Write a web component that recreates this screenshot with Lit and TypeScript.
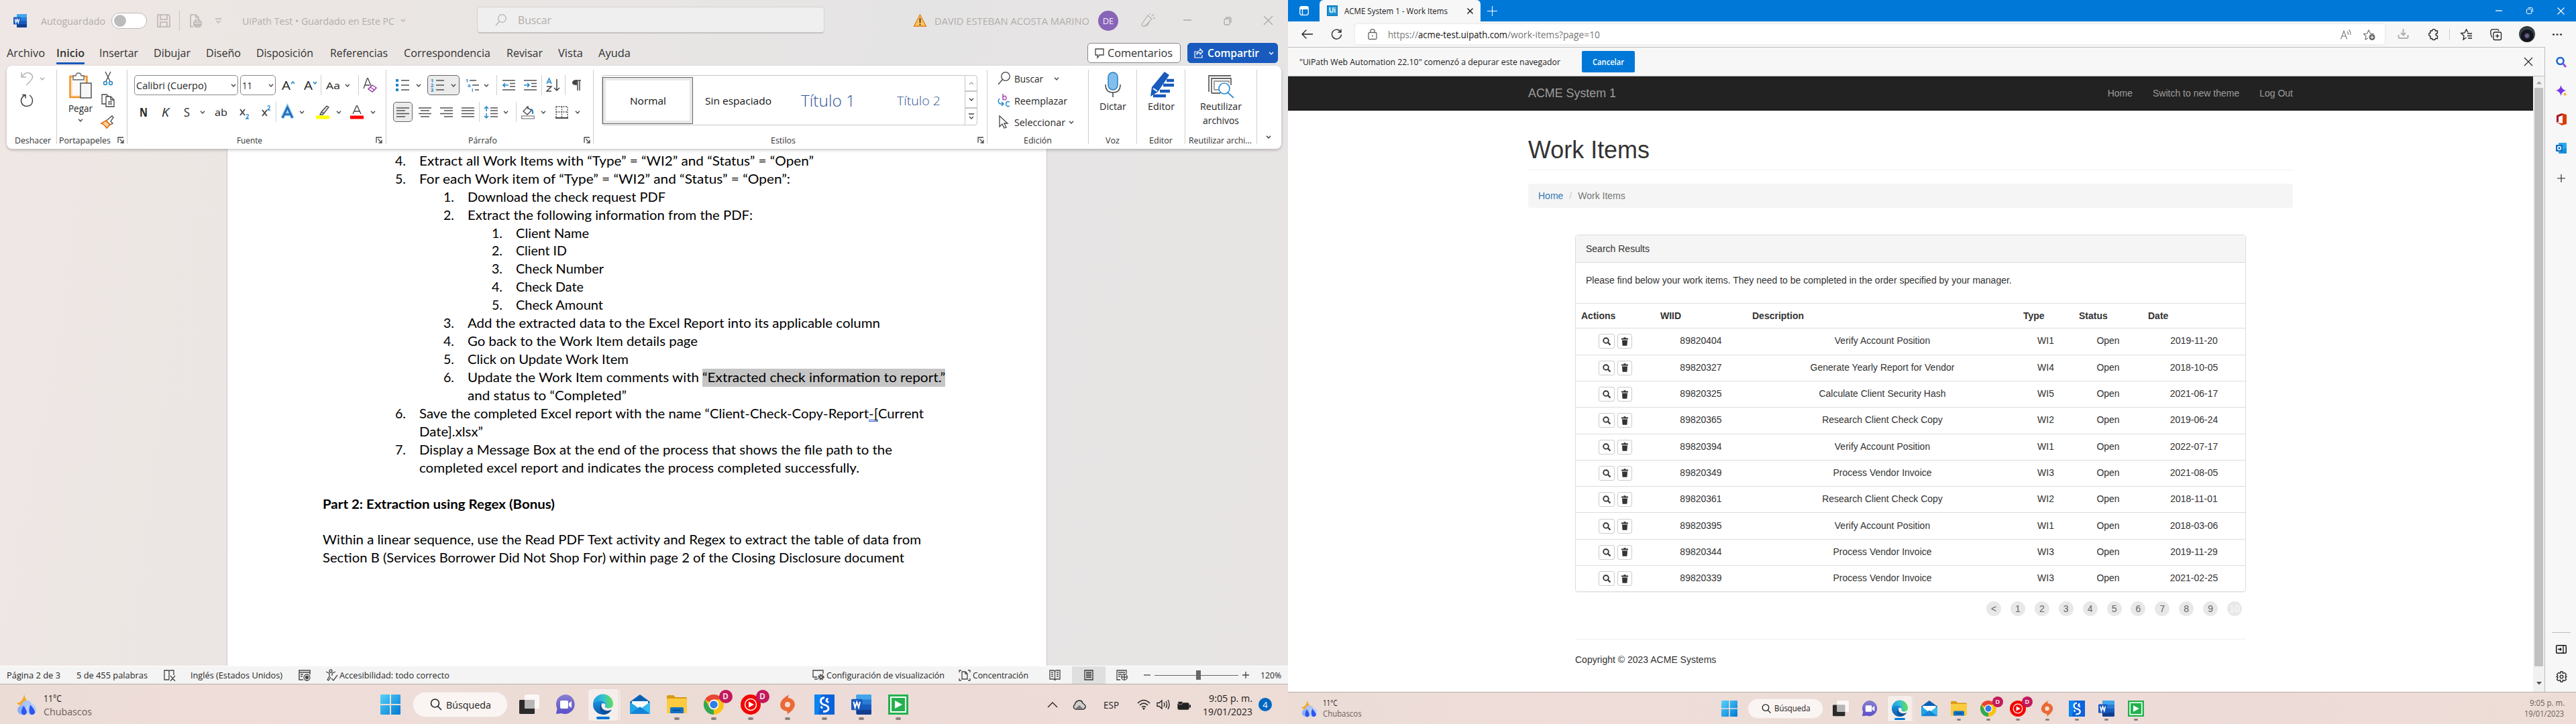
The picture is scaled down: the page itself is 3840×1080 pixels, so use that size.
import { LitElement, html, svg, css } from "lit";
import { customElement, property } from "lit/decorators.js";

const base = css`
  * { box-sizing: border-box; }
  .cell { flex: none; display: flex; align-items: center; justify-content: center; height: 100%; }
  .row { display: flex; align-items: center; }
  svg { display: block; flex: none; overflow: visible; }
`;

/* Single line of text set to a given measure. */
@customElement("fit-text")
class FitText extends LitElement {
  @property({ type: Number }) w = 0;
  @property() text = "";
  static styles = css`
    :host { display: inline-block; flex: none; white-space: pre; vertical-align: baseline; }
    span { display: inline-block; transform-origin: 0 50%; }
  `;
  render() { return html`<span>${this.text}</span>`; }
  firstUpdated() {
    this.style.width = this.w + "px";
    const s = this.renderRoot.querySelector("span")!;
    const ratio = this.getBoundingClientRect().width / s.getBoundingClientRect().width;
    s.style.transform = `scaleX(${ratio})`;
  }
}

type Item = [number, number, unknown];
/* Lays items out in a row from their left and right edges. */
const strip = (x0: number, items: Item[]) => {
  let cur = x0;
  return items.map(([a, b, c]) => {
    const m = a - cur;
    cur = b;
    return html`<span class="cell" style="margin-left:${m}px;width:${b - a}px">${c}</span>`;
  });
};
const tx = (a: number, b: number, text: string, cls = ""): Item => [a, b, html`<fit-text class=${cls} .w=${b - a} .text=${text}></fit-text>`];
const ft = (w: number, text: string, cls = "") => html`<fit-text class=${cls} .w=${w} .text=${text}></fit-text>`;
const ic = (w: number, h: number, body: unknown, vb = `0 0 ${w} ${h}`) =>
  html`<svg width=${w} height=${h} viewBox=${vb} fill="none" stroke="#444" stroke-width="1.3">${body}</svg>`;
const chev = (c = "#444", w = 8) => ic(w, 5, svg`<path d="M1 .8 4 4 7 .8" stroke=${c} stroke-width="1.3"/>`, "0 0 8 5");
const launch = ic(10, 10, svg`<path d="M1 9V1H9M3.5 3.5 9 9M9 4.5V9H4.5"/>`);
const vsep = html`<i class="vsep"></i>`;
const lines = (ls: number[][], c = "#505050") => svg`${ls.map(([a, b, y]) => svg`<path d="M${a} ${y}H${b}" stroke=${c} stroke-width="1.5"/>`)}`;

const wordIcon = (s: number) => ic(s, s, svg`<g stroke="none"><rect x="5" y="0" width="15" height="20" rx="1.2" fill="#2b7cd3"/><path d="M6.2 0H18.8Q20 0 20 1.2V5H5V1.2Q5 0 6.2 0Z" fill="#41a5ee"/><rect x="5" y="10" width="15" height="5" fill="#185abd"/><path d="M5 15H20V18.8Q20 20 18.8 20H6.2Q5 20 5 18.8Z" fill="#103f91"/><rect x="0" y="4.5" width="11" height="11" rx="1" fill="#185abd"/></g><path d="M2.3 7.2 3.7 12.8 5.5 7.6 7.3 12.8 8.7 7.2" stroke="#fff" stroke-width="1.4"/>`, "0 0 20 20");

const tb = {
  weather: ic(30, 31, svg`<g stroke="none"><path d="M11 0Q13 8 17 11Q14 17 8 16Q2 16 0 13Q9 12 11 0Z" fill="#f5a623"/><circle cx="15" cy="17" r="8" fill="#a9c4f7"/><circle cx="8" cy="23" r="7" fill="#8db0f5"/><circle cx="21" cy="22" r="8" fill="#b5cdfa"/><path d="M10 17q7 9 4 12q-4 3-6 0q-3-3 2-12zM20 15q9 10 7 13q-4 4-7 1q-3-4 0-14z" fill="#2f55ee"/></g>`),
  start: ic(30, 30, svg`<defs><linearGradient id="w" x1="0" y1="0" x2="1" y2="1"><stop offset="0" stop-color="#55d3fb"/><stop offset="1" stop-color="#0078d4"/></linearGradient></defs><path d="M1 0H14V14H0V1ZM16 0H29L30 1V14H16ZM0 16H14V30H1L0 29ZM16 16H30V29L29 30H16Z" fill="url(#w)" stroke="none"/>`),
  view: ic(30, 30, svg`<rect x="0" y="8" width="23" height="21" rx="1.5" fill="#2b2b2b" stroke="none"/><rect x="8" y="0" width="22" height="21" rx="1.5" fill="#fff" opacity=".78" stroke="none"/><rect x="8" y="8" width="15" height="13" fill="#b9b7b6" stroke="none"/>`),
  chat: ic(29, 30, svg`<defs><linearGradient id="c" x1="0" y1="0" x2="0" y2="1"><stop offset="0" stop-color="#8a7fd0"/><stop offset="1" stop-color="#5a50c9"/></linearGradient></defs><path d="M14.500 0A14.500 14.500 0 1 1 8 28L0 29 1.500 21A14.500 14.500 0 0 1 14.500 0Z" fill="url(#c)" stroke="none"/><rect x="6" y="9" width="12" height="12" rx="2" fill="#fff" stroke="none"/><path d="M19 13 23 10V20L19 17Z" fill="#fff" stroke="none"/>`),
  edge: ic(30, 30, svg`<defs><linearGradient id="e1" x1="0" y1=".4" x2="1" y2=".3"><stop offset="0" stop-color="#1b9de2"/><stop offset=".5" stop-color="#35c1d2"/><stop offset="1" stop-color="#66e04a"/></linearGradient><linearGradient id="e2" x1="0" y1="0" x2="0" y2="1"><stop offset="0" stop-color="#1491de"/><stop offset="1" stop-color="#0b5cae"/></linearGradient></defs><g stroke="none"><path d="M0 15A15 15 0 0 1 30 14Q30 20.500 23 20.500Q17 20.500 18 17Q19 11 12 10Q4 9 0 15Z" fill="url(#e1)"/><path d="M0 15Q3 9 11 9.500Q18 10 18.500 15Q15 11 11.500 15Q9 21 15 26Q20 29 27 24Q22 30 15 30A15 15 0 0 1 0 15Z" fill="url(#e2)"/><path d="M11 15Q8 25 16 29.900Q24 29 28 22.500Q20 26 15 22Q11 18 13 14Z" fill="#0d4f9a"/><path d="M13.500 14.500Q17 12.500 18.300 16Q17 19 18.500 20Q21 22 26 21Q20 25 15.500 21.500Q12.500 18 13.500 14.500Z" fill="#f5ece8"/></g>`),
  mail: ic(30, 30, svg`<g stroke="none"><path d="M0 11 15 0 30 11V15H0Z" fill="#0a61b4"/><path d="M3 10H27V18L15 27 3 18Z" fill="#fff"/><path d="M0 11 15 22 0 29Z" fill="#1fa5e8"/><path d="M30 11 15 22 30 29Z" fill="#35b9f1"/><path d="M0 29 15 18 30 29Z" fill="#1584d6"/></g>`),
  folder: ic(30, 28, svg`<g stroke="none"><path d="M0 2Q0 0 2 0H10L13 3H28Q30 3 30 5V10H0Z" fill="#d99a12"/><rect x="0" y="5" width="30" height="22" rx="1.500" fill="#fccb3f"/><path d="M5 27V20Q5 18 7 18H23Q25 18 25 20V27Z" fill="#1272c4"/><rect x="9" y="21.500" width="12" height="2" rx="1" fill="#0a4d96"/></g>`),
  chrome: ic(30, 30, svg`<g stroke="none"><circle cx="15" cy="15" r="15" fill="#fbc116"/><path d="M15 15 2 7.500A15 15 0 0 1 28 7.500H15Z" fill="#ea4335"/><path d="M2 7.500 8.500 18.800 15 22.500 15 30A15 15 0 0 1 2 7.500Z" fill="#34a853"/><path d="M15 30 21.500 18.800 15 22Z" fill="#fbc116"/><circle cx="15" cy="15" r="7.400" fill="#fff"/><circle cx="15" cy="15" r="5.800" fill="#2f7de9"/></g>`),
  yt: ic(30, 30, svg`<circle cx="15" cy="15" r="15" fill="#f50400" stroke="none"/><circle cx="15" cy="15" r="8.500" stroke="#fff" stroke-width="1.500"/><path d="M12 10.500 20 15 12 19.500Z" fill="#fff" stroke="none"/>`),
  origin: ic(24, 30, svg`<path d="M15 0Q12 3 13 5Q22 6 23 15Q22 23 11 30Q13 27 11 25Q1 23 1 15Q2 6 15 0Z" fill="#eb6a35" stroke="none"/><circle cx="12" cy="15" r="4" fill="#f3ddd5" stroke="none"/>`),
  ess: ic(30, 30, svg`<rect width="30" height="30" fill="#0b62da" stroke="none"/><path d="M0 0H11L6 30H0Z" fill="#0a84f2" stroke="none"/><path d="M15 4.500Q9.500 5 9.500 10Q9.500 14 15 15.500Q21 17 21 21Q20.500 25.500 13 25.500M20.500 6Q18 6.500 18 9.500L21 12M9.500 18 12 20.500" stroke="#fff" stroke-width="2.800"/>`),
  cam: ic(30, 30, svg`<rect width="30" height="30" fill="#23b14d" stroke="none"/><rect x="4" y="4" width="22" height="22" stroke="#fff" stroke-width="2"/><path d="M10 9 21 15 10 21Z" fill="#fff" stroke="none"/>`),
};

@customElement("task-bar")
class TaskBar extends LitElement {
  @property({ type: Boolean }) main = false;
  static styles = [base, css`
    :host { display: block; color: #1d1a19; font: 15px "Open Sans", sans-serif; background: linear-gradient(90deg, #ebdcd6, #efddda 20%, #ecdcd5 45%, #eddbd8 75%, #edddd6); }
    .bar { height: 59px; padding-top: 1px; }
    .two { display: flex; flex-direction: column; gap: 0; width: 100%; line-height: 20px; }
    .dim { color: #6b605d; }
    .right { align-items: flex-end; }
    .pill { display: flex; align-items: center; width: 100%; height: 38px; border-radius: 19px; background: #faf5f3; border: 1px solid #f0e3df; }
    .app { display: grid; grid-template-rows: 1fr 7px; width: 100%; height: 49px; padding-top: 7px; place-items: center; position: relative; }
    .on { background: #f6eeeb; border: 1px solid #e6d8d4; border-radius: 5px; box-shadow: 3px 0 0 -1px #f3e8e4; }
    .dot { width: 8px; height: 4px; border-radius: 2px; background: #8b807d; }
    .on .dot { width: 20px; background: #0078d7; }
    .none { background: transparent; }
    .badge { position: absolute; left: 31px; top: 2px; width: 20px; height: 20px; border-radius: 50%; background: #c2185b; color: #f4d9e3; font-size: 12px; line-height: 20px; text-align: center; }
    .count { width: 20px; height: 20px; border-radius: 50%; background: #0067c0; color: #fff; font-size: 13px; line-height: 20px; text-align: center; }
  `];
  render() {
    const o = this.main ? 0 : 241;
    const app = (cx: number, icon: unknown, k = "", badge = false): Item => [o + cx - 23.5, o + cx + 23.5,
      html`<div class="app ${k === "on" ? "on" : ""}">${icon}<i class="dot ${k === "off" ? "none" : ""}"></i>${badge ? html`<b class="badge">D</b>` : ""}</div>`];
    const end = this.main ? 1867 : 2378.5;
    const tray: Item[] = this.main ? [
      [1561, 1577, ic(16, 10, svg`<path d="M1 9 8 2 15 9" stroke="#222"/>`)],
      [1599, 1619, ic(20, 15, svg`<path d="M4 14A4 4 0 0 1 3 7Q5 1 10 1Q14 1 15 5Q20 8 19 11Q18 14 15 14Z" fill="#cfccca" stroke="#222"/><path d="M10 8 3 14H16Z" fill="#777" stroke="none"/>`)],
      tx(1645, 1668, "ESP"),
      [1695, 1714, ic(20, 16, svg`<path d="M1 6Q10-3 19 6M4 9Q10 3 16 9M7 12Q10 9 13 12" stroke="#222" stroke-width="1.500"/><circle cx="10" cy="14" r="1.500" fill="#222" stroke="none"/>`)],
      [1724, 1744, ic(20, 16, svg`<path d="M1 5.500H4L8 2V14L4 10.500H1ZM11 5Q13 8 11 11M14 3Q17 8 14 13M17 1Q21 8 17 15" stroke="#222"/>`)],
      [1754, 1775, ic(21, 17, svg`<rect x="2" y="6" width="16" height="9" rx="1.500" fill="#222" stroke="#222"/><path d="M19 8.500H21V12.500H19Z" fill="#222" stroke="none"/><path d="M4 0V3M8 0V3M2 3.500H9V5Q9 8 5.500 8Q2 8 2 5Z" fill="#222" stroke="#ecdcd7" stroke-width=".6"/>`)],
    ] : [];
    return html`<div class="bar row">${strip(0, [
      [25, 55, tb.weather],
      [65, 137, html`<div class="two">${ft(27, "11°C")}${ft(72, "Chubascos", "dim")}</div>`],
      [o + 566.5, o + 596.5, tb.start],
      [o + 615, o + 757, html`<div class="pill">${strip(615, [[640, 658, ic(18, 18, svg`<circle cx="7.500" cy="7" r="6" stroke="#222" stroke-width="1.600"/><path d="M11.500 11.500 17 17" stroke="#222" stroke-width="1.600"/>`)], tx(664, 731, "Búsqueda")])}</div>`],
      app(788.5, tb.view, "off"), app(843.5, tb.chat, "off"), app(899, tb.edge, "on"), app(954, tb.mail, "off"),
      app(1009, tb.folder), app(1064, tb.chrome, "", true), app(1119, tb.yt, "", true), app(1174, tb.origin),
      app(1229, tb.ess), app(1284, wordIcon(30)), app(1339, tb.cam), ...tray,
      [end - 74, end, html`<div class="two right ${this.main ? "" : "dim"}">${ft(65, "9:05 p. m.")}${ft(74, "19/01/2023")}</div>`],
      ...(this.main ? [[1876, 1896, html`<div class="count">4</div>`] as Item] : []),
    ])}</div>`;
  }
}

@customElement("word-window")
class WordWindow extends LitElement {
  static styles = [base, css`
    :host { display: flex; flex-direction: column; height: 1080px; font: 15px "Open Sans", sans-serif; color: #262626; background: linear-gradient(100deg, #efe7e5, #ebe6e3 22%, #e8e5e4 45%, #e5e4e4 65%, #e8e4e4); }
    .title { height: 61px; color: #b3adab; }
    .toggle { width: 53px; height: 24px; border-radius: 12px; background: #fff; border: 1px solid #bcb8b6; padding: 2px 3px; }
    .toggle i { display: block; width: 18px; height: 18px; border-radius: 50%; background: #bdbcbc; }
    .vl { width: 1px; height: 30px; background: #c9c3c1; }
    .search { width: 100%; height: 40px; margin-top: -1px; border-radius: 5px; background: #efefef; border: 1px solid #d6d3d2; border-bottom: 2px solid #c4c2c1; font-size: 16px; }
    .avatar { width: 30px; height: 30px; border-radius: 50%; background: #8764b8; color: #f3eef9; font-size: 13px; line-height: 30px; text-align: center; }
    .tabs { height: 37px; font-size: 16px; color: #333; }
    .tabs .cell { align-items: center; }
    .tab { border-bottom: 3px solid transparent; line-height: 27px; padding-top: 3px; }
    .sel { border-bottom-color: #185abd; font-weight: 600; border-radius: 0 0 1px 1px; }
    .btn { display: flex; align-items: center; width: 100%; height: 30px; border-radius: 5px; border: 1px solid #8a8886; background: #fff; font-size: 16px; margin-top: -1px; }
    .blue { background: #185abd; border-color: #185abd; color: #fff; font-weight: 600; }
    .ribbon { position: relative; z-index: 2; display: flex; margin: 0 10px; height: 124px; padding-top: 6px; background: #fff; border-radius: 8px; box-shadow: 0 2px 4px rgba(0,0,0,.22); font-size: 14px; flex: none; }
    .group { flex: none; height: 111px; border-right: 1px solid #d1cfce; display: flex; flex-direction: column; }
    .group:last-child { border: 0; }
    .body { height: 99px; }
    .label { height: 12px; font-size: 12.5px; color: #333; }
    .r46 { height: 46px; } .r34 { height: 34px; } .r26 { height: 26px; } .r40 { height: 40px; } .r24 { height: 24px; }
    .vsep { width: 1px; height: 30px; background: #d1cfce; }
    .box { width: 100%; height: 30px; display: flex; align-items: center; border: 1px solid #8a8886; border-radius: 5px; }
    .hot { background: #ebebeb; border-color: #666; }
    .ch { font-size: 19px; line-height: 24px; }
    .b { font-weight: 700; font-size: 18px; } .i { font-style: italic; } .u { text-decoration: underline; } .s { text-decoration: line-through; }
    .clip { display: flex; }
    .big { display: flex; flex-direction: column; align-items: center; padding-top: 3px; line-height: 21px; }
    .big svg { margin-bottom: 2px; }
    .paste { padding-top: 5px; }
    .paste svg { margin-bottom: 4px; }
    .gallery { display: flex; height: 75px; border: 1px solid #c8c6c4; border-radius: 4px; margin: 8px 14px 0 12px; width: 560px; font: 15px "Open Sans"; color: #111; }
    .normal { width: 100%; height: 70px; border: 1px solid #666; box-shadow: inset 0 0 0 4px #e8e8e8; display: flex; align-items: center; justify-content: center; }
    .t1 { font-size: 23px; color: #2f5496; font-weight: 300; } .t2 { font-size: 18px; color: #2f5496; font-weight: 300; }
    .roll { display: grid; grid-template-rows: 1fr 1fr 1fr; place-items: center; width: 18px; height: 73px; border-left: 1px solid #c8c6c4; margin-left: auto; }
    .roll span { display: flex; width: 100%; height: 100%; align-items: center; justify-content: center; border-bottom: 2px solid #c8c6c4; }
    .roll span:last-child { border: 0; }
    .canvas { flex: 1; display: flex; }
    .page { width: 1223px; margin-left: 338px; background: #fff; border: 1px solid #c9c5c4; border-width: 0 1px; padding: 4.800px 0 0 142px; font: 19.600px Lato, sans-serif; color: #000; }
    .line { display: flex; height: 26.940px; line-height: 26.940px; white-space: pre; }
    .l1 { padding-left: 108px; } .l2 { padding-left: 180px; } .l3 { padding-left: 252px; } .c1 { padding-left: 144px; } .c2 { padding-left: 216px; }
    .num { width: 36px; flex: none; display: block; }
    .mark { background: #c6c6c6; height: 27px; margin-left: 5px; }
    .bold { font-weight: 700; }
    .gram { display: inline-block; height: 25px; border-bottom: 3px double #2b5fd0; }
    .status { height: 28px; background: #f4f4f4; border-top: 1px solid #fff; border-bottom: 1px solid #b8acaa; font-size: 12.800px; }
    .active { width: 100%; height: 100%; background: #dfdfdf; display: flex; align-items: center; justify-content: center; }
    .slider { width: 100%; height: 1px; background: #666; display: flex; align-items: center; }
    .slider i { width: 7px; height: 14px; background: #666; margin-left: 62px; }
  `];
  group(a: number, b: number, body: unknown, label: Item[]) {
    return html`<section class="group" style="width:${b - a + 1}px"><div class="body">${body}</div><div class="label row">${strip(a, label)}</div></section>`;
  }
  ribbon() {
    const A = (a: number, b: number, up: boolean): Item => [a, b, html`${ft(13, "A", "ch")}${ic(7, 14, svg`<path d=${up ? "M1 5 3.500 2 6 5" : "M1 2 3.500 5 6 2"} stroke="#2086c9" stroke-width="1.500"/>`)}`];
    const list = (c: unknown) => ic(20, 20, svg`${lines([[8, 20, 3], [8, 20, 10], [8, 20, 17]])}${c}`);
    const dig = (x: number, y: number, s: string) => svg`<text x=${x} y=${y} font-size="7.500" font-weight="700" font-family="Open Sans" fill="#2086c9" stroke="none">${s}</text>`;
    const al = (k: number) => {
      const s = [[19, 3], [13, 7], [19, 11.5], [13, 16]];
      return ic(19, 19, lines(s.map(([w, y]) => k === 3 ? [0, 19, y] : k === 0 ? [0, w, y] : k === 1 ? [(19 - w) / 2, (19 + w) / 2, y] : [19 - w, 19, y])));
    };
    const ind = (r: boolean) => ic(19, 18, svg`${lines([[0, 19, 2], [11, 19, 6.5], [11, 19, 11], [0, 19, 16]])}<path d=${r ? "M0 9H8M5 6 8 9 5 12" : "M1 9H9M4 6 1 9 4 12"} stroke="#2086c9" stroke-width="1.500"/>`);
    return html`<div class="ribbon">
      ${this.group(10, 84, html`
        <div class="row r26">${strip(10, [[31, 50, ic(19, 21, svg`<path d="M1 1V8H8M1.500 7.500Q7 0 13 2Q19 5 17 10Q15 14 8 20" stroke="#b5b3b2" stroke-width="1.500"/>`)], [59, 67, chev("#aaa")]])}</div>
        <div class="row r40">${strip(10, [[30, 50, ic(20, 20, svg`<path d="M3 1.500H8V6.500M7.500 2Q1 5 1.500 11Q3 18.500 10 18.500Q18 18 18.500 10.500Q18.500 5 14 2" stroke-width="1.500"/>`)]])}</div>`,
        [tx(22, 76, "Deshacer")])}
      ${this.group(85, 189, html`<div class="clip">
        <div class="big paste" style="margin-left:16px;width:38px">${ic(34, 38, svg`<rect x="1.500" y="5" width="25" height="31" fill="#fde8c4" stroke="#f0922b" stroke-width="2.500"/><rect x="5" y="9" width="18" height="24" fill="#fafafa" stroke="none"/><path d="M6 4H10Q10 0 14 0Q18 0 18 4H22V10H6Z" fill="#fff" stroke="#666"/><rect x="17" y="15" width="16" height="22" fill="#f7f7f7" stroke="#555" stroke-width="1.500"/>`)}${ft(36, "Pegar")}<div style="margin-top:5px">${chev()}</div></div>
        <div style="margin-left:12px">
          <div class="row r26">${ic(20, 21, svg`<path d="M6 0 13 14M14 0 7 14"/><circle cx="6" cy="17" r="2.500" stroke="#2086c9" stroke-width="1.500"/><circle cx="14" cy="17" r="2.500" stroke="#2086c9" stroke-width="1.500"/>`)}</div>
          <div class="row r40">${ic(20, 20, svg`<path d="M7 15H1V1H8L11 4M7 4H14L19 9V19H7ZM14 4V9H19M10 12H16M10 15H16"/>`)}</div>
          <div class="row r24">${ic(20, 20, svg`<path d="M10 6 16 1 18 3 14 9 17 12 13 14 7 8Z" fill="#fff"/><path d="M7 8 13 14 8 19Q5 14 0 12Z" fill="#fbd59b" stroke="#e8701b" stroke-width="1.800"/>`)}</div>
        </div></div>`, [tx(88, 165, "Portapapeles"), [175, 185, launch]])}
      ${this.group(190, 575, html`
        <div class="row r46">${strip(190, [
          [200, 355, html`<div class="box">${strip(201, [tx(203, 308, "Calibri (Cuerpo)"), [344, 352, chev()]])}</div>`],
          [358, 411, html`<div class="box">${strip(359, [tx(361, 376, "11"), [400, 408, chev()]])}</div>`],
          A(420, 440, true), A(453, 472, false), [478, 479, vsep],
          tx(486, 507, "Aa"), [514, 521, chev()], [534, 535, vsep],
          [541, 562, ic(21, 22, svg`<path d="M1 16 6.500 1H7.500L12 12M3 11H10"/><path d="M14 11 20 15 14 21 8 17Z" fill="#fff" stroke="#9b3aa5" stroke-width="1.500"/><path d="M11 14 17 18" stroke="#9b3aa5"/>`)]])}</div>
        <div class="row r34">${strip(190, [
          tx(208, 220, "N", "b"), tx(241, 252, "K", "ch i"), tx(274, 283, "S", "ch u"), [298, 305, chev()],
          tx(320, 339, "ab", "s"),
          [357, 372, ic(15, 20, svg`<path d="M1 6 8 15M8 6 1 15" stroke-width="1.800"/><path d="M10 15Q11 13 13 14Q14 16 10 20H14" stroke="#2086c9"/>`)],
          [390, 403, ic(13, 20, svg`<path d="M1 7 8 16M8 7 1 16" stroke-width="1.800"/><path d="M9 2Q10 0 12 1Q13 3 9 7H13" stroke="#2086c9"/>`)],
          [411, 412, vsep],
          [419, 438, ic(19, 19, svg`<path d="M2 18 9.500 2 17 18M5 12.500H14" stroke="#7fb9ea" stroke-width="5"/><path d="M2 18 9.500 2 17 18M5 12.500H14" stroke="#1767b5" stroke-width="2.200"/>`)],
          [446, 454, chev()],
          [471, 491, ic(20, 21, svg`<path d="M8 10 16 1 19 3 12 12ZM8 10 6 14H10L12 12" fill="#ddd"/><rect x="0" y="15.500" width="20" height="5" fill="#ff0" stroke="none"/>`)],
          [501, 508, chev()],
          [522, 542, ic(20, 21, svg`<path d="M4 13 9.500 1H10.500L16 13M6 9H14"/><rect x="0" y="15.500" width="20" height="5" fill="red" stroke="none"/>`)],
          [552, 559, chev()]])}</div>`, [tx(353, 391, "Fuente"), [560, 570, launch]])}
      ${this.group(576, 884, html`
        <div class="row r46">${strip(576, [
          [590, 610, list(svg`<path d="M0 3H4M0 10H4M0 17H4" stroke="#2086c9" stroke-width="4"/>`)], [620, 628, chev()],
          [637, 685, html`<div class="box hot">${strip(638, [[642, 662, list(svg`${dig(0, 6, "1")}${dig(0, 13, "2")}${dig(0, 20, "3")}`)], [672, 679, chev()]])}</div>`],
          [694, 714, ic(20, 20, svg`${lines([[6, 16, 3], [10, 20, 10], [14, 20, 17]])}${dig(0, 6, "1")}${dig(3, 13, "a")}${dig(9, 20, "i")}`)], [721, 728, chev()],
          [740, 741, vsep], [749, 768, ind(false)], [781, 800, ind(true)], [807, 808, vsep],
          [814, 835, ic(21, 20, svg`<path d="M1 8 4.500 0 8 8M2.500 5.500H7" stroke="#2086c9" stroke-width="1.500"/><path d="M1 12H8L1 19H8M16 1V18M12 14 16 18 20 14" stroke-width="1.500"/>`)],
          [842, 843, vsep],
          [853, 866, ic(13, 17, svg`<path d="M6 1H13M8 1V16M11 1V16" stroke-width="1.500"/><path d="M7 0Q0 0 0 4.500Q0 8 7 8Z" fill="#444" stroke="none"/>`)]])}</div>
        <div class="row r34">${strip(576, [
          [586, 615, html`<div class="box hot">${strip(587, [[591, 610, al(0)]])}</div>`],
          [624, 643, al(1)], [656, 675, al(2)], [688, 707, al(3)], [714, 715, vsep],
          [721, 743, ic(22, 19, svg`${lines([[10, 21, 3], [10, 21, 7], [10, 21, 11.5], [10, 21, 16]])}<path d="M4 1V8M1 4 4 1 7 4M4 11V18M1 15 4 18 7 15" stroke="#2086c9" stroke-width="1.500"/>`)],
          [750, 757, chev()], [769, 770, vsep],
          [777, 797, ic(20, 21, svg`<path d="M8 2 15 8 9 14 3 9 10 2V6"/><path d="M14 6Q18 6 17 13" stroke="#2086c9" stroke-width="2"/><rect x=".7" y="16" width="18.500" height="4" stroke="#888"/>`)],
          [806, 814, chev()],
          [828, 847, ic(19, 19, svg`<path d="M1 1H18V17M1 1V17M9.500 1V17M1 9H18" stroke-dasharray="2 1.500"/><path d="M0 18H19" stroke-width="2"/>`)],
          [857, 865, chev()]])}</div>`, [tx(698, 741, "Párrafo"), [870, 880, launch]])}
      ${this.group(885, 1471, html`<div class="gallery row">${strip(898, [
          [898, 1033, html`<div class="normal">${ft(54, "Normal")}</div>`],
          tx(1051, 1150, "Sin espaciado"), tx(1194, 1275, "Título 1", "t1"), tx(1337, 1402, "Título 2", "t2")])}
          <div class="roll"><span>${ic(8, 5, svg`<path d="M1 4 4 1 7 4" stroke="#aaa"/>`)}</span><span>${chev()}</span><span>${ic(8, 9, svg`<path d="M0 1H8M1 5 4 8 7 5"/>`)}</span></div></div>`,
        [tx(1149, 1186, "Estilos"), [1457, 1467, launch]])}
      ${this.group(1472, 1622, html`
        <div class="row r26">${strip(1472, [[1487, 1507, ic(20, 20, svg`<circle cx="12" cy="7" r="6.300"/><path d="M7.500 11.500 1 19"/>`)], tx(1512, 1555, "Buscar"), [1571, 1578, chev()]])}</div>
        <div class="row r40">${strip(1472, [[1487, 1506, ic(19, 20, svg`<path d="M8 0V9M8 5Q10 2 12.500 4Q14 8 11 9Q9 9 8 7" stroke="#a64cb0" stroke-width="1.500"/><path d="M18 12Q13 10 12.500 15Q13 20 18 18M3 7Q-1 12 4 15H9M6 12 9 15 6 18" stroke="#2086c9" stroke-width="1.500"/>`)], tx(1512, 1591, "Reemplazar")])}</div>
        <div class="row r24">${strip(1472, [[1489, 1503, ic(14, 20, svg`<path d="M1 1V17L5 13 8 19 11 18 8 12H13Z"/>`)], tx(1512, 1588, "Seleccionar"), [1593, 1600, chev()]])}</div>`,
        [tx(1526, 1568, "Edición")])}
      ${this.group(1623, 1694, html`<div class="big">${ic(24, 39, svg`<rect x="5" y="1" width="14" height="26" rx="7" fill="#83bfec" stroke="#2a7fc4" stroke-width="1.500"/><path d="M1 19Q1 31 12 31Q23 31 23 19M12 31V38" stroke-width="1.500"/>`)}${ft(40, "Dictar")}</div>`, [tx(1648, 1669, "Voz")])}
      ${this.group(1695, 1766, html`<div class="big">${ic(38, 39, svg`<path d="M24 0 31 5 14 30 3 37 5 23Z" fill="#185abd" stroke="none"/><path d="M7 25 13 29" stroke="#fff" stroke-width="2"/><path d="M27 13H38M22 20H38M17 29H32M7 36H26" stroke="#185abd" stroke-width="4.500"/>`)}${ft(40, "Editor")}</div>`, [tx(1713, 1748, "Editor")])}
      ${this.group(1767, 1873, html`<div class="big">${ic(38, 39, svg`<path d="M1 30V6H34M5 32V10H34V20M5 32H18" stroke="#666" stroke-width="1.800"/><path d="M9 27V14H31V17M9 27H16" stroke="#999" stroke-width="1.800"/><circle cx="24" cy="25" r="8" fill="#fff" stroke="#2f8fd4" stroke-width="1.700"/><path d="M29 31 38 39" stroke="#2f8fd4" stroke-width="1.700"/>`)}${ft(62, "Reutilizar")}${ft(54, "archivos")}</div>`, [tx(1772, 1866, "Reutilizar archi...")])}
      ${this.group(1874, 1909, "", [[1885, 1897, html`<div style="margin-top:-9px">${chev("#333", 12)}</div>`]])}
    </div>`;
  }
  line(pad: string, num: string, ...parts: unknown[]) {
    return html`<div class="line ${pad}">${num ? html`<span class="num">${ft(16, num)}</span>` : ""}${parts}</div>`;
  }
  render() {
    const g = "#b9b3b1";
    const L = this.line.bind(this);
    const d = "#444";
    return html`
      <div class="title row">${strip(0, [
        [20, 40, wordIcon(20)], tx(61, 157, "Autoguardado"),
        [166, 219, html`<div class="toggle"><i></i></div>`],
        [234, 254, ic(20, 20, svg`<path d="M1 1H17L19 3V19H1ZM5 1V8H15V1M5 19V12H15V19" stroke=${g} stroke-width="1.500"/>`)],
        [267, 268, html`<i class="vl"></i>`],
        [283, 301, ic(18, 20, svg`<path d="M5 19H1V1H9L13 5V9M9 1V5H13M6 12H17V17H6ZM8 12V9H15V12M8 15H15V19H8Z" stroke=${g} stroke-width="1.500"/>`)],
        [321, 330, ic(9, 8, svg`<path d="M0 1H9M1.500 4 4.500 7 7.500 4" stroke=${g}/>`)],
        tx(361, 588, "UiPath Test • Guardado en Este PC"), [595, 607, chev(g, 12)],
        [711, 1229, html`<div class="search row">${strip(712, [[738, 755, ic(17, 18, svg`<circle cx="10.500" cy="6.500" r="5.800" stroke=${g}/><path d="M6.500 11 1 17" stroke=${g}/>`)], tx(772, 822, "Buscar")])}</div>`],
        [1362, 1381, ic(19, 19, svg`<path d="M9.500 1 18.500 18H.5Z" fill="#fbc55c" stroke="#e07b1c"/><path d="M9.500 6V13M9.500 14.500V16.500" stroke="#333" stroke-width="1.700"/>`)],
        tx(1393, 1624, "DAVID ESTEBAN ACOSTA MARINO"), [1637, 1667, html`<div class="avatar">DE</div>`],
        [1701, 1722, ic(21, 21, svg`<path d="M1 16 10 3 16 8 6 19 2 19ZM6 17Q9 21 12 13M13 2V0M16 4 19 1M18 7H21" stroke=${g}/>`)],
        [1764, 1776, ic(12, 2, svg`<path d="M0 0H12" stroke="#aaa" stroke-width="1.500"/>`)],
        [1824, 1836, ic(12, 12, svg`<rect x="1" y="3" width="8" height="9" rx="1.500" stroke="#aaa"/><path d="M3 1H9Q11 1 11 3V9" stroke="#aaa"/>`)],
        [1884, 1897, ic(13, 13, svg`<path d="M0 0 13 13M13 0 0 13" stroke="#aaa"/>`)],
      ])}</div>
      <div class="tabs row">${strip(0, [
        ...([[10, 67, "Archivo"], [84, 126, "Inicio"], [148, 206, "Insertar"], [229, 284, "Dibujar"], [307, 359, "Diseño"], [382, 467, "Disposición"], [492, 578, "Referencias"], [602, 731, "Correspondencia"], [755, 809, "Revisar"], [832, 869, "Vista"], [892, 940, "Ayuda"]] as [number, number, string][])
          .map(([a, b, s]) => tx(a, b, s, s === "Inicio" ? "tab sel" : "tab")),
        [1621, 1760, html`<div class="btn">${strip(1622, [[1632, 1646, ic(14, 15, svg`<path d="M1 1H13V10H7L4 14V10H1Z"/>`)], tx(1651, 1748, "Comentarios")])}</div>`],
        [1770, 1905, html`<div class="btn blue">${strip(1771, [[1780, 1794, ic(14, 15, svg`<path d="M4 5H1V14H12V10M9 1 13 5 9 9V6.500Q5 6 4 10Q4 3.500 9 3.500Z" stroke="#fff" stroke-width="1.200"/>`)], tx(1800, 1877, "Compartir"), [1891, 1899, chev("#fff")]])}</div>`],
      ])}</div>
      ${this.ribbon()}
      <div class="canvas"><div class="page">
        ${L("l1", "4.", ft(588, "Extract all Work Items with “Type” = “WI2” and “Status” = “Open”"))}
        ${L("l1", "5.", ft(553, "For each Work item of “Type” = “WI2” and “Status” = “Open”:"))}
        ${L("l2", "1.", ft(295, "Download the check request PDF"))}
        ${L("l2", "2.", ft(425, "Extract the following information from the PDF:"))}
        ${L("l3", "1.", ft(109, "Client Name"))}
        ${L("l3", "2.", ft(76, "Client ID"))}
        ${L("l3", "3.", ft(131, "Check Number"))}
        ${L("l3", "4.", ft(101, "Check Date"))}
        ${L("l3", "5.", ft(130, "Check Amount"))}
        ${L("l2", "3.", ft(615, "Add the extracted data to the Excel Report into its applicable column"))}
        ${L("l2", "4.", ft(343, "Go back to the Work Item details page"))}
        ${L("l2", "5.", ft(240, "Click on Update Work Item"))}
        ${L("l2", "6.", ft(345, "Update the Work Item comments with"), html`<span class="mark">${ft(362, "“Extracted check information to report.”")}</span>`)}
        ${L("c2", "", ft(237, "and status to “Completed”"))}
        ${L("l1", "6.", ft(670, "Save the completed Excel report with the name “Client-Check-Copy-Report"), html`<span class="gram">${ft(14, "-[")}</span>`, ft(68, "Current"))}
        ${L("c1", "", ft(95, "Date].xlsx”"))}
        ${L("l1", "7.", ft(705, "Display a Message Box at the end of the process that shows the file path to the"))}
        ${L("c1", "", ft(656, "completed excel report and indicates the process completed successfully."))}
        ${L("", "")}
        ${L("bold", "", ft(346, "Part 2: Extraction using Regex (Bonus)"))}
        ${L("", "")}
        ${L("", "", ft(892, "Within a linear sequence, use the Read PDF Text activity and Regex to extract the table of data from"))}
        ${L("", "", ft(867, "Section B (Services Borrower Did Not Shop For) within page 2 of the Closing Disclosure document"))}
      </div></div>
      <div class="status row">${strip(0, [
        tx(10, 90, "Página 2 de 3"), tx(114, 220, "5 de 455 palabras"),
        [244, 262, ic(18, 17, svg`<path d="M8 15H1V1H7L8 2.500 9 1H15V8M8 2V15M10 9 17 17M17 9 10 17" stroke=${d}/>`)],
        tx(284, 421, "Inglés (Estados Unidos)"),
        [445, 463, ic(18, 17, svg`<path d="M7 15H1V1H17V7M1 4H17M3 7H7M3 10H6" stroke=${d} stroke-width="1.500"/><circle cx="12.500" cy="11.500" r="4.500" stroke=${d}/><circle cx="12.500" cy="11.500" r="2" fill=${d}/>`)],
        [485, 503, ic(18, 18, svg`<circle cx="8" cy="3" r="2" stroke=${d}/><path d="M1 4 6 6.500V11L3 16 5 17 8 12M15 4 10 6.500V10M9 14 12 17 18 9" stroke=${d}/>`)],
        tx(506, 670, "Accesibilidad: todo correcto"),
        [1211, 1229, ic(18, 16, svg`<path d="M7 11H1V1H16V6M3 14H8" stroke=${d}/><circle cx="13" cy="11" r="3.500" stroke=${d} stroke-width="2.200" stroke-dasharray="1.800 1"/><circle cx="13" cy="11" r="2" stroke=${d}/>`)],
        tx(1232, 1408, "Configuración de visualización"),
        [1429, 1447, ic(18, 17, svg`<path d="M4 1H1V4M14 1H17V4M4 16H1V13M14 16H17V13M5 3H10L13 6V14H5ZM10 3V6H13" stroke=${d}/>`)],
        tx(1450, 1533, "Concentración"),
        [1564, 1581, ic(17, 16, svg`<path d="M8.500 2V15M1 1H7L8.500 2.500 10 1H16V14H10L8.500 15.500 7 14H1ZM3 4H6M3 7H6M3 10H6M11 4H14M11 7H14M11 10H14" stroke=${d}/>`)],
        [1598, 1648, html`<div class="active">${ic(14, 16, svg`<path d="M1 1H13V15H1ZM3 4H11M3 6.500H11M3 9H11M3 11.500H11" stroke="#333"/>`)}</div>`],
        [1664, 1681, ic(17, 16, svg`<path d="M6 15H1V1H15V6M3 4H13M3 7H8M3 10H6" stroke=${d}/><circle cx="12" cy="11" r="4.300" stroke=${d}/><path d="M8 11H16M12 7V15" stroke=${d}/>`)],
        [1705, 1715, ic(10, 2, svg`<path d="M0 1H10" stroke=${d}/>`)],
        [1721, 1846, html`<div class="slider"><i></i></div>`],
        [1852, 1862, ic(10, 10, svg`<path d="M0 5H10M5 0V10" stroke=${d}/>`)],
        tx(1879, 1910, "120%"),
      ])}</div>
      <task-bar main></task-bar>`;
  }
}

const rows: [string, string, string, string][] = [
  ["89820404", "Verify Account Position", "WI1", "2019-11-20"],
  ["89820327", "Generate Yearly Report for Vendor", "WI4", "2018-10-05"],
  ["89820325", "Calculate Client Security Hash", "WI5", "2021-06-17"],
  ["89820365", "Research Client Check Copy", "WI2", "2019-06-24"],
  ["89820394", "Verify Account Position", "WI1", "2022-07-17"],
  ["89820349", "Process Vendor Invoice", "WI3", "2021-08-05"],
  ["89820361", "Research Client Check Copy", "WI2", "2018-11-01"],
  ["89820395", "Verify Account Position", "WI1", "2018-03-06"],
  ["89820344", "Process Vendor Invoice", "WI3", "2019-11-29"],
  ["89820339", "Process Vendor Invoice", "WI3", "2021-02-25"],
];

@customElement("edge-window")
class EdgeWindow extends LitElement {
  static styles = [base, css`
    :host { display: flex; flex-direction: column; height: 1080px; background: #f7f7f7; font: 12px "Open Sans", sans-serif; color: #1a1a1a; }
    .tabs { height: 32px; background: #0078d7; }
    .tab { width: 100%; height: 32px; background: #f7f7f7; border-radius: 6px 6px 0 0; }
    .fav { width: 16px; height: 16px; background: #1a94d6; border: 1px solid #0d6fb0; color: #fff; font: 700 10px/13px "Liberation Sans"; text-align: center; }
    .tools { height: 38px; }
    .addr { width: 100%; height: 30px; background: #fff; border-radius: 4px; box-shadow: 0 0 3px rgba(0,0,0,.12); font-size: 14px; color: #767676; }
    .host { color: #111; }
    .vl { width: 1px; height: 16px; background: #ccc; }
    .avatar { width: 24px; height: 24px; border-radius: 50%; background: radial-gradient(circle at 50% 60%, #6a6390 0 10%, #15151d 26% 45%, #3f5056 60%, #20262c 72%, #8d7765 95%); }
    .main { flex: 1; display: flex; }
    .view { width: 1874px; border-top: 1px solid #bdbdbd; border-right: 1px solid #bdbdbd; display: flex; flex-direction: column; }
    .info { height: 43px; border-bottom: 1px solid #bdbdbd; flex: none; }
    .cancel { width: 100%; height: 32px; border-radius: 2px; background: #0078d7; color: #fff; font-weight: 600; display: flex; align-items: center; justify-content: center; }
    .web { flex: 1; display: flex; }
    .page { width: 1856px; background: #fff; font: 14px/20px "Liberation Sans", sans-serif; color: #333; }
    .nav { height: 51px; background: #222; border-bottom: 1px solid #080808; color: #9d9d9d; padding: 0 358px; display: flex; align-items: center; gap: 30px; }
    .brand { font-size: 18px; margin-right: auto; }
    .wrap { width: 1140px; margin-left: 358px; }
    h1 { font-size: 36px; font-weight: 500; line-height: 40px; margin: 39px 0 0; height: 50px; border-bottom: 1px solid #eee; }
    .crumb { margin-top: 20px; height: 36px; background: #f5f5f5; border-radius: 4px; padding: 0 15px; display: flex; align-items: center; color: #777; }
    .crumb a { color: #337ab7; } .crumb i { color: #ccc; font-style: normal; padding: 0 9px; }
    .inner { width: 1000px; margin: 40px 0 0 70px; }
    .panel { border: 1px solid #ddd; border-radius: 4px; box-shadow: 0 1px 1px rgba(0,0,0,.05); }
    .head { height: 41px; background: #f5f5f5; border-bottom: 1px solid #ddd; padding: 10px 15px; }
    .desc { height: 60px; padding: 16px 15px; }
    .tr { display: grid; grid-template-columns: 118px 137px 404px 83px 103px 1fr; border-top: 1px solid #ddd; height: 39.330px; padding-bottom: 2px; align-items: center; text-align: center; }
    .th { height: 37.200px; padding: 0; text-align: left; font-weight: 700; } .th span { padding-left: 8px; }
    .acts { display: flex; gap: 4px; padding-left: 34px; padding-top: 2px; }
    .ab { width: 24px; height: 22px; border: 1px solid #ccc; border-radius: 3px; display: flex; align-items: center; justify-content: center; } .ab + .ab { width: 22px; }
    .pager { display: flex; justify-content: flex-end; gap: 13.900px; padding: 14px 6px 34px 0; border-bottom: 1px solid #eee; }
    .pager span { width: 22px; height: 22px; border-radius: 50%; background: #e8e8e8; color: #666; line-height: 23px; text-align: center; }
    .pager .cur { color: #fafafa; }
    .foot { margin-top: 20px; }
    .bar { width: 17px; background: #f1f1f1; display: flex; flex-direction: column; align-items: center; padding: 6px 0; }
    .thumb { width: 13px; height: 863px; background: #c1c1c1; margin: 5px 0 22px 0; }
    .side { flex: 1; display: flex; flex-direction: column; align-items: center; padding: 15px 0 14px 2px; gap: 26px; }
    .side hr { width: 28px; height: 1px; border: 0; background: #bbb; margin: auto 0 -8px; }
    .tb { flex: none; height: 48px; border-top: 1px solid #b8acaa; background: #ecdcd7; }
    .tb task-bar { height: 59px; zoom: .8; }
  `];
  render() {
    const k = "#222";
    return html`
      <div class="tabs row">${strip(1920, [
        [1937, 1951, ic(14, 14, svg`<rect x=".7" y=".7" width="12.600" height="12.600" rx="2.500" stroke="#fff"/><path d="M1 3H13" stroke="#fff" stroke-width="4"/><path d="M4.500 5V13" stroke="#fff"/>`)],
        [1967, 2207, html`<div class="tab row">${strip(1967, [[1978, 1994, html`<div class="fav">Ui</div>`], tx(2004, 2158, "ACME System 1 - Work Items"), [2187, 2196, ic(9, 9, svg`<path d="M.5.5 8.500 8.500M8.500.5.5 8.500" stroke="#111"/>`)]])}</div>`],
        [2217, 2232, ic(15, 15, svg`<path d="M7.500 0V15M0 7.500H15" stroke="#fff" stroke-width="1"/>`)],
        [3720, 3730, ic(10, 2, svg`<path d="M0 1H10" stroke="#fff"/>`)],
        [3766, 3776, ic(10, 10, svg`<rect x=".5" y="2.500" width="7" height="7" rx="1" stroke="#fff" stroke-width="1"/><path d="M3 .5H7.500Q9.500.5 9.500 2.500V7" stroke="#fff" stroke-width="1"/>`)],
        [3812, 3823, ic(11, 11, svg`<path d="M.5.5 10.500 10.500M10.500.5.5 10.500" stroke="#fff" stroke-width="1.100"/>`)],
      ])}</div>
      <div class="tools row">${strip(1920, [
        [1940, 1957, ic(17, 14, svg`<path d="M17 7H1M7.500.5 1 7 7.500 13.500" stroke=${k}/>`)],
        [1984, 2001, ic(17, 17, svg`<path d="M14.500 4.500A7 7 0 1 0 15.500 8.500M15 .5V5H10.500" stroke=${k}/>`)],
        [2020, 3555, html`<div class="addr row">${strip(2020, [
          [2039, 2053, ic(14, 16, svg`<rect x="1" y="5.500" width="12" height="10" rx="1.500" stroke="#666"/><path d="M4 5.500V3Q4 .7 7 .7Q10 .7 10 3V5.500" stroke="#666"/><circle cx="7" cy="10.500" r="1" fill="#666" stroke="none"/>`)],
          tx(2069, 2114, "https://"), tx(2114, 2247, "acme-test.uipath.com", "host"), tx(2247, 2385, "/work-items?page=10"),
          [3489, 3505, ic(16, 15, svg`<path d="M.5 14.500 5 2 9.500 14.500M2 10H8M10 3Q12 5 11 8M12.500.5Q16 4 14.500 8" stroke="#767676" stroke-width="1.100"/>`)],
          [3523, 3541, ic(18, 17, svg`<path d="M7 14 3 16 4 11 .5 7.500 5.500 7 8 2 10.500 7 15.500 7.500" stroke="#666" stroke-width="1.100"/><circle cx="13" cy="12.500" r="4.500" fill="#666" stroke="none"/><path d="M13 10V15M10.500 12.500H15.500" stroke="#fff" stroke-width="1.200"/>`)],
        ])}</div>`],
        [3574, 3591, ic(17, 16, svg`<path d="M8.500 0V9M5 6 8.500 9.500 12 6M1.500 9V12Q1.500 14 3.500 14H13.500Q15.500 14 15.500 12V9" stroke="#b0b0b0" stroke-width="2"/>`)],
        [3620, 3636, ic(16, 17, svg`<path d="M3 3H5.500Q5.500.7 8 .7Q10.500.7 10.500 3H13.500V6.500Q11 6.500 11 8.500Q11 10.500 13.500 10.500V14.500H10.500Q10.500 16.500 8 16.500Q5.500 16.500 5.500 14.500H3V11Q.7 11 .7 8.500Q.7 6 3 6Z" stroke=${k}/>`)],
        [3651, 3652, html`<i class="vl"></i>`],
        [3668, 3685, ic(17, 17, svg`<path d="M8.500 13 4 16 5 10.500.7 6.500 6 6 8.500 1 11 5.500M10 7H17M10 10.500H17M11 14H17" stroke=${k}/>`)],
        [3712, 3729, ic(17, 17, svg`<rect x="5" y="5" width="11.500" height="11.500" rx="2" stroke=${k}/><path d="M3 13Q.5 9 .7 4Q1 1 4 .8H11Q12.500 1 13 3M10.700 8V13.500M8 10.700H13.500" stroke=${k}/>`)],
        [3755, 3779, html`<div class="avatar"></div>`],
        [3805, 3819, ic(14, 3, svg`<path d="M0 1.500H3M5.500 1.500H8.500M11 1.500H14" stroke=${k} stroke-width="2.200"/>`)],
      ])}</div>
      <div class="main">
        <div class="view">
          <div class="info row">${strip(1920, [
            tx(1937, 2326, "\"UiPath Web Automation 22.10\" comenzó a depurar este navegador"),
            [2358, 2437, html`<div class="cancel">${ft(47, "Cancelar")}</div>`],
            [3763, 3775, ic(12, 12, svg`<path d="M0 0 12 12M12 0 0 12" stroke=${k} stroke-width="1.100"/>`)],
          ])}</div>
          <div class="web">
            <div class="page">
              <div class="nav"><span class="brand">${ft(131, "ACME System 1")}</span><span>Home</span><span>Switch to new theme</span><span>Log Out</span></div>
              <div class="wrap">
                <h1>${ft(181, "Work Items")}</h1>
                <div class="crumb"><a>Home</a><i>/</i>Work Items</div>
                <div class="inner">
                  <div class="panel">
                    <div class="head">Search Results</div>
                    <div class="desc">Please find below your work items. They need to be completed in the order specified by your manager.</div>
                    <div class="tr th">${["Actions", "WIID", "Description", "Type", "Status", "Date"].map((h) => html`<span>${h}</span>`)}</div>
                    ${rows.map(([id, desc, type, date]) => html`<div class="tr">
                      <span class="acts"><b class="ab">${ic(12, 12, svg`<circle cx="5" cy="5" r="3.800" stroke="#333" stroke-width="1.900"/><path d="M7.800 7.800 11.500 11.500" stroke="#333" stroke-width="2.200"/>`)}</b><b class="ab">${ic(10, 13, svg`<path d="M0 1.500H3.500V.3H6.500V1.500H10V3.500H0ZM1 4.500H9L8.500 12Q8.500 12.700 7.800 12.700H2.200Q1.500 12.700 1.500 12Z" fill="#333" stroke="none"/>`)}</b></span>
                      <span>${id}</span><span>${desc}</span><span>${type}</span><span>Open</span><span>${date}</span></div>`)}
                  </div>
                  <div class="pager">${["<", "1", "2", "3", "4", "5", "6", "7", "8", "9", "10"].map((p) => html`<span class=${p === "10" ? "cur" : ""}>${p}</span>`)}</div>
                  <div class="foot">Copyright © 2023 ACME Systems</div>
                </div>
              </div>
            </div>
            <div class="bar">${ic(8, 6, svg`<path d="M0 5.500 4 1 8 5.500Z" fill="#a3a3a3" stroke="none"/>`)}<div class="thumb"></div>${ic(8, 6, svg`<path d="M0 1 4 5.500 8 1Z" fill="#505050" stroke="none"/>`)}</div>
          </div>
        </div>
        <div class="side">
          ${ic(16, 16, svg`<circle cx="6.500" cy="6" r="5" stroke="#1a63cf" stroke-width="2.500"/><path d="M10.500 10 15 15" stroke="#8a53e6" stroke-width="3"/>`)}
          ${ic(17, 16, svg`<path d="M7.500 0Q8.500 6.500 15 8Q8.500 9.500 7.500 16Q6.500 9.500 0 8Q6.500 6.500 7.500 0Z" fill="#7a35e8" stroke="none"/><path d="M13.500 10Q14 13 17 13.500Q14 14 13.500 17Q13 14 10 13.500Q13 13 13.500 10Z" fill="#f7b52c" stroke="none"/>`)}
          ${ic(16, 18, svg`<path d="M9 0 1 3V14L4 12V5L10 3V15L2 14 9 18 16 16V2Z" fill="#d83b01" stroke="none"/><path d="M1 4V14L4 12.500V5L9 3V0Z" fill="#a6152a" stroke="none"/>`)}
          ${ic(16, 16, svg`<rect x="4" y="0" width="12" height="16" rx="1" fill="#28a8ea" stroke="none"/><path d="M10 11 16 7V16H4Z" fill="#1490df" stroke="none"/><rect x="0" y="3" width="10" height="10" rx="1" fill="#0f6cbd" stroke="none"/><circle cx="5" cy="8" r="2.400" stroke="#fff" stroke-width="1.500"/>`)}
          <div style="margin-top:5px">${ic(12, 12, svg`<path d="M6 0V12M0 6H12" stroke=${k} stroke-width="1.100"/>`)}</div>
          <hr>
          ${ic(16, 13, svg`<rect x=".7" y=".7" width="14.600" height="11.600" rx="1.500" stroke="#111" stroke-width="1.500"/><path d="M11 1V12M3 6.500H8M6 4.500 8 6.500 6 8.500" stroke="#111"/>`)}
          ${ic(17, 17, svg`<path d="M7 1H10L10.500 3.500 13 2.500 15.500 5 14 7.500 16 8.500 14 10 15.500 12.500 13 14.500 10.500 13.500 10 16H7L6.500 13.500 4 14.500 1.500 12.500 3 10 1 8.500 3 7.500 1.500 5 4 2.500 6.500 3.500Z" stroke="#222"/><circle cx="8.500" cy="8.500" r="2.300" stroke="#222"/>`)}
        </div>
      </div>
      <div class="tb"><task-bar></task-bar></div>`;
  }
}

@customElement("app-root")
class AppRoot extends LitElement {
  static styles = css`
    :host { display: flex; width: 3840px; height: 1080px; overflow: hidden; }
    word-window, edge-window { width: 1920px; flex: none; }
  `;
  render() { return html`<word-window></word-window><edge-window></edge-window>`; }
}
